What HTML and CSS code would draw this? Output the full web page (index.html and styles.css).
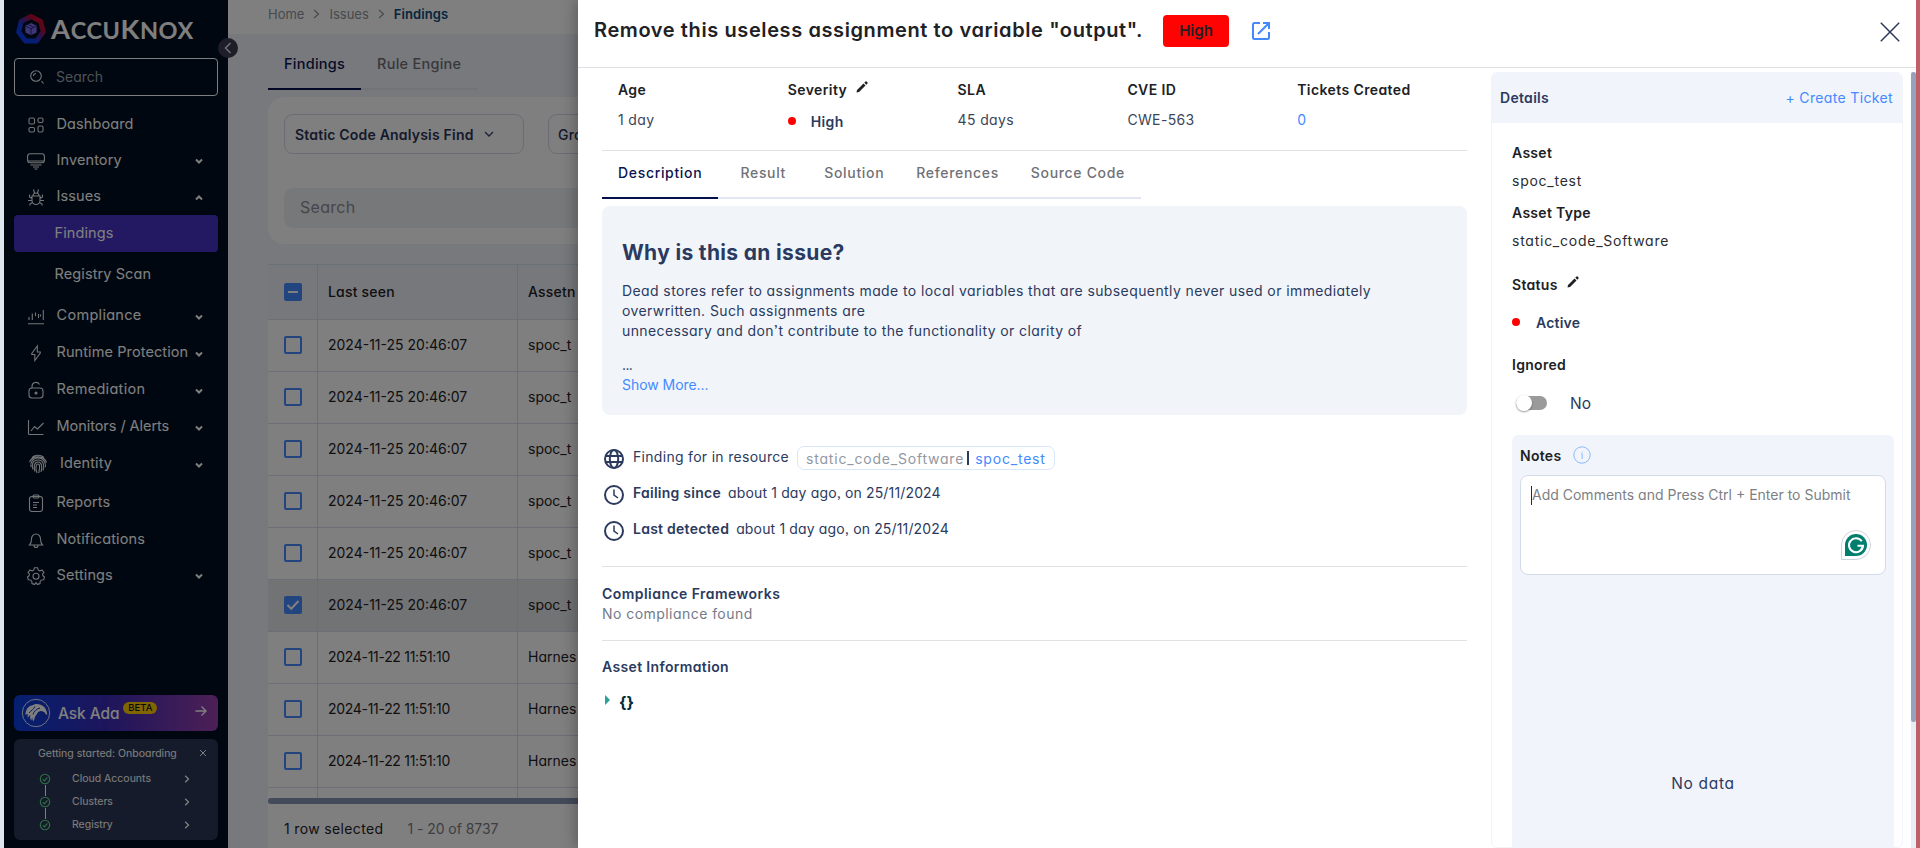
FILE: index.html
```html
<!DOCTYPE html>
<html lang="en">
<head>
<meta charset="utf-8">
<title>AccuKnox - Findings</title>
<link rel="stylesheet" href="styles.css">
</head>
<body>
<div class="app">
  <aside class="sidebar">
    <div class="brand">
      <svg class="brand-mark" width="32" height="32" viewBox="0 0 32 32">
        <defs><linearGradient id="ring" x1="0" y1="1" x2="1" y2="0"><stop offset=".3" stop-color="#0a3cf0"/><stop offset=".52" stop-color="#4a2a9c"/><stop offset=".75" stop-color="#b80c30"/></linearGradient></defs>
        <path d="M16 3.500 25.700 8.200 28.300 19 21.500 28H10.500L3.700 19 6.300 8.200Z" fill="none" stroke="url(#ring)" stroke-width="5" stroke-linejoin="round"/>
        <path d="M16 10 21.600 12.800v6.600L16 22.300 10.400 19.400V12.800Z" fill="#7d6cf0"/>
        <path d="m10.400 13 5.600 2.800 5.600-2.800M16 15.800v6.500M13.200 11.500l5.600 2.900" fill="none" stroke="#1a1d5c" stroke-width=".8"/>
      </svg>
      <div class="brand-name"><span class="big">A</span>CCU<span class="big">K</span>NOX</div>
    </div>
    <div class="side-search">
      <svg class="ic" width="16" height="16" viewBox="0 0 16 16"><circle cx="7" cy="7" r="5.300"/><path d="m12.500 12 2 2.500M4.500 7A2.500 2.500 0 0 1 7 4.500"/></svg>
      <span>Search</span>
    </div>
    <nav class="nav">
      <div class="item h36"><svg class="ic" width="18" height="18" viewBox="0 0 18 18"><rect x="2" y="2" width="5.500" height="6" rx="1.500"/><rect x="11" y="2" width="5" height="4.500" rx="1.500"/><rect x="2" y="11.500" width="5.500" height="4.500" rx="1.500"/><rect x="11" y="10" width="5" height="6" rx="1.500"/></svg><span class="lbl">Dashboard</span></div>
      <div class="item h36"><svg class="ic" width="18" height="18" viewBox="0 0 18 18"><rect x=".6" y="1.800" width="16.800" height="9" rx="2.500"/><path d="M1 9h16M3.500 13h11M6 15h6M7.500 17h3"/></svg><span class="lbl">Inventory</span><svg class="arr" width="10" height="8" viewBox="0 0 10 8"><path d="m2 2.500 3 3 3-3"/></svg></div>
      <div class="item"><svg class="ic" width="18" height="18" viewBox="0 0 18 18"><path d="M5 8h8v4.500a4 4 0 0 1-8 0ZM6 8a3 3 0 0 1 6 0M7.500 5 6.500 1.500M10.500 5l1-3.500M5 10.500 2.500 9V6.500M13 10.500 15.500 9V6.500M5 12.500H1M13 12.500h4M5.500 14.500 3 16v1.500M12.500 14.500 15 16v1.500"/></svg><span class="lbl">Issues</span><svg class="arr" width="10" height="8" viewBox="0 0 10 8"><path d="m2 5.500 3-3 3 3"/></svg></div>
      <div class="item sub active"><span class="lbl">Findings</span></div>
      <div class="item sub h45"><span class="lbl">Registry Scan</span></div>
      <div class="item"><svg class="ic" width="18" height="18" viewBox="0 0 18 18"><path d="M1 16.800h16M2 13v-3M5.300 13V6.500M8.500 9V5.500M11.500 11V7M13.500 9.500V7.500M16.300 13V3"/></svg><span class="lbl cmp">Compliance</span><svg class="arr" width="10" height="8" viewBox="0 0 10 8"><path d="m2 2.500 3 3 3-3"/></svg></div>
      <div class="item"><svg class="ic" width="18" height="18" viewBox="0 0 18 18"><path d="M10.300 2 4.800 9.500v1h3V16.500l5.500-7.500V8h-3Z"/></svg><span class="lbl">Runtime Protection</span><svg class="arr" width="10" height="8" viewBox="0 0 10 8"><path d="m2 2.500 3 3 3-3"/></svg></div>
      <div class="item"><svg class="ic" width="18" height="18" viewBox="0 0 18 18"><rect x="2" y="7" width="14" height="10" rx="3"/><path d="M5 7V5.500a4 4 0 0 1 7.500-2"/><circle cx="9" cy="12" r="1" fill="#fff"/></svg><span class="lbl cmp">Remediation</span><svg class="arr" width="10" height="8" viewBox="0 0 10 8"><path d="m2 2.500 3 3 3-3"/></svg></div>
      <div class="item"><svg class="ic" width="18" height="18" viewBox="0 0 18 18"><path d="M1.500 2v13.500a1 1 0 0 0 1 1H16.500M4 13l3.500-4.500 3 2.500 6-6"/></svg><span class="lbl mon">Monitors / Alerts</span><svg class="arr" width="10" height="8" viewBox="0 0 10 8"><path d="m2 2.500 3 3 3-3"/></svg></div>
      <div class="item ident"><svg class="ic" width="20" height="20" viewBox="0 0 20 20"><path d="M4 3.500a9 9 0 0 1 12 0M1.500 8a9 8 0 0 1 17 .5M3 13c-1-5 2-9 7-9s8 4 7.500 9M5 15.500c-1.500-4-1-9.500 5-9.500s6.500 6 5 10.500M7 17.500C5.500 13 6 8 10 8s4.500 5 3 10M9 19c-1.500-4-1.500-9 1-9s1.500 5 .8 9"/></svg><span class="lbl">Identity</span><svg class="arr" width="10" height="8" viewBox="0 0 10 8"><path d="m2 2.500 3 3 3-3"/></svg></div>
      <div class="item h40"><svg class="ic" width="18" height="18" viewBox="0 0 18 18"><rect x="2.500" y="2.500" width="13" height="15" rx="2.500"/><rect x="6" y="1" width="6" height="3" rx="1.200"/><path d="M6 8.500h6M6 11h4M6 13.500h4"/></svg><span class="lbl">Reports</span></div>
      <div class="item h35"><svg class="ic" width="18" height="18" viewBox="0 0 18 18"><path d="M2.500 14h13c-1.500-1.500-2-3-2-6a4.500 5 0 0 0-9 0c0 3-.5 4.500-2 6ZM7 14.500a2 2 0 0 0 4 0"/></svg><span class="lbl">Notifications</span></div>
      <div class="item h36"><svg class="ic" width="18" height="18" viewBox="0 0 18 18"><path d="m7.300.8-.5 2.300-1.600.8-2.100-1L1 5.300l1.500 1.800-.4 1.700L.5 10l.8 2.800 2.300.2 1.200 1.300.2 2.300 2.700.8L9 15.500l1.300 1.900 2.700-.8.200-2.300 1.200-1.300 2.300-.2.800-2.800-1.600-1.200-.4-1.700L17 5.300l-2.100-2.400-2.100 1-1.600-.8-.5-2.300Z" stroke-linejoin="round"/><circle cx="9" cy="9.300" r="3"/></svg><span class="lbl">Settings</span><svg class="arr" width="10" height="8" viewBox="0 0 10 8"><path d="m2 2.500 3 3 3-3"/></svg></div>
    </nav>
    <div class="ada">
      <svg width="30" height="30" viewBox="0 0 30 30"><circle cx="15" cy="15" r="13.700" fill="none" stroke="#dfe4ff"/><path d="M4.500 17C4.500 12 7 8 11 7.500c2-1.500 5-2 8-1 4.500 1.500 7 5 7.200 10.500L24 15.500c-.6-1.200-1.500-2-3-2.300-2.300-.4-4 .5-5 2.600-.5 1.500-2 2-2.300 4 .1 1.500-1 1.700-1.200 3.700-1-1.300-1.300-2.500-1-4-1 1-1.200 1.800-1 3-1.500-1.500-1.700-3-1-5.300C8 17.500 7.300 18.500 7 20c-.6-1.500-.5-2.800 0-4-1 0-1.800.3-2.500 1Z" fill="#fff"/><path d="M8 15c2.500-3 4.500-3.500 6-6.500M12 16.500c1-3 3-5.500 7-6.500M20.500 14.500l3 .3v3" stroke="#1538b8" fill="none"/></svg>
      <span class="ada-name">Ask Ada</span><span class="beta">BETA</span>
      <svg class="ada-arrow" width="12" height="12" viewBox="0 0 12 12"><path d="M.5 6h10.500M6.500 1.500 11 6l-4.500 4.500" fill="none" stroke="#fff" stroke-width="1.400"/></svg>
    </div>
    <div class="onb">
      <div class="onb-head"><span>Getting started: Onboarding</span><svg width="8" height="8" viewBox="0 0 8 8"><path d="m1 1 6 6M7 1 1 7" stroke="#fff" fill="none"/></svg></div>
      <div class="onb-row"><i class="tick link"><svg width="12" height="12" viewBox="0 0 12 12"><circle cx="6" cy="6" r="4.700"/><path d="m3.700 6.200 1.700 1.700 3-3.500"/></svg></i><span>Cloud Accounts</span><svg class="go" width="6" height="8" viewBox="0 0 6 8"><path d="m1.200.8 3.300 3.200-3.300 3.200"/></svg></div>
      <div class="onb-row"><i class="tick link"><svg width="12" height="12" viewBox="0 0 12 12"><circle cx="6" cy="6" r="4.700"/><path d="m3.700 6.200 1.700 1.700 3-3.500"/></svg></i><span>Clusters</span><svg class="go" width="6" height="8" viewBox="0 0 6 8"><path d="m1.200.8 3.300 3.200-3.300 3.200"/></svg></div>
      <div class="onb-row"><i class="tick"><svg width="12" height="12" viewBox="0 0 12 12"><circle cx="6" cy="6" r="4.700"/><path d="m3.700 6.200 1.700 1.700 3-3.500"/></svg></i><span>Registry</span><svg class="go" width="6" height="8" viewBox="0 0 6 8"><path d="m1.200.8 3.300 3.200-3.300 3.200"/></svg></div>
    </div>
  </aside>
  <button class="collapse" aria-label="Collapse"><svg width="8" height="12" viewBox="0 0 8 12"><path d="M6.500 1 1.500 6l5 5" fill="none" stroke="#e8e8ee" stroke-width="1.400"/></svg></button>

  <main class="main">
    <div class="crumbs"><span class="c1">Home</span><svg width="7" height="10" viewBox="0 0 7 10"><path d="m1 1 4.500 4L1 9"/></svg><span class="c2">Issues</span><svg width="7" height="10" viewBox="0 0 7 10"><path d="m1 1 4.500 4L1 9"/></svg><b>Findings</b></div>
    <div class="tabs page-tabs"><div class="tab on">Findings</div><div class="tab">Rule Engine</div></div>
    <section class="filters">
      <div class="selects">
        <div class="select"><span>Static Code Analysis Find</span><svg width="10" height="6" viewBox="0 0 10 6"><path d="m1 1 4 4 4-4" fill="none" stroke="#39436b" stroke-width="1.300"/></svg></div>
        <div class="select second"><span>Gro</span></div>
      </div>
      <div class="find">Search</div>
    </section>
    <div class="table">
      <div class="tr th"><div><i class="cb part"></i></div><div>Last seen</div><div>Assetn</div></div>
      <div class="tr"><div><i class="cb"></i></div><div>2024-11-25 20:46:07</div><div>spoc_t</div></div>
      <div class="tr"><div><i class="cb"></i></div><div>2024-11-25 20:46:07</div><div>spoc_t</div></div>
      <div class="tr"><div><i class="cb"></i></div><div>2024-11-25 20:46:07</div><div>spoc_t</div></div>
      <div class="tr"><div><i class="cb"></i></div><div>2024-11-25 20:46:07</div><div>spoc_t</div></div>
      <div class="tr"><div><i class="cb"></i></div><div>2024-11-25 20:46:07</div><div>spoc_t</div></div>
      <div class="tr sel"><div><i class="cb full"><svg width="14" height="12" viewBox="0 0 14 12"><path d="m1.500 6 3.700 3.800L12.500 2" fill="none" stroke="#fff" stroke-width="2"/></svg></i></div><div>2024-11-25 20:46:07</div><div>spoc_t</div></div>
      <div class="tr d22"><div><i class="cb"></i></div><div>2024-11-22 11:51:10</div><div>Harnes</div></div>
      <div class="tr d22"><div><i class="cb"></i></div><div>2024-11-22 11:51:10</div><div>Harnes</div></div>
      <div class="tr d22"><div><i class="cb"></i></div><div>2024-11-22 11:51:10</div><div>Harnes</div></div>
      <div class="tr cut"><div></div><div></div><div></div></div>
    </div>
    <div class="hbar"></div>
    <div class="tfoot"><span class="rs">1 row selected</span><span class="rc">1 - 20 of 8737</span></div>
  </main>

  <div class="backdrop"></div>

  <div class="drawer">
    <header class="dhead">
      <h1>Remove this useless assignment to variable "output".</h1>
      <span class="badge">High</span>
      <svg class="ext" width="20" height="20" viewBox="0 0 20 20"><path d="M9 2H3.300A1.300 1.300 0 0 0 2 3.300v13.400A1.300 1.300 0 0 0 3.300 18h13.400a1.300 1.300 0 0 0 1.300-1.300V11M12 2h6v6M18 2 7 13" fill="none" stroke="#448aff" stroke-width="2"/></svg>
      <svg class="close" width="20" height="20" viewBox="0 0 20 20"><path d="m.8.8 18.400 18.400M19.200.8.8 19.200" fill="none" stroke="#2b3a5e" stroke-width="1.500"/></svg>
    </header>
    <div class="dbody">
      <div class="left">
        <div class="facts">
          <div><b>Age</b><span>1 day</span></div>
          <div><b>Severity<svg class="pen" width="12" height="12" viewBox="0 0 12 12"><path d="M.5 11.500 1 9 7.500 2.500l2 2L3 11ZM8.300 1.700 9.500.500a.8.8 0 0 1 1.100 0l.9.900a.8.8 0 0 1 0 1.100L10.300 3.700Z"/></svg></b><span class="sev"><i class="dot"></i>High</span></div>
          <div><b>SLA</b><span>45 days</span></div>
          <div><b>CVE ID</b><span>CWE-563</span></div>
          <div><b>Tickets Created</b><span class="blue">0</span></div>
        </div>
        <div class="tabs dtabs"><div class="tab on">Description</div><div class="tab">Result</div><div class="tab">Solution</div><div class="tab">References</div><div class="tab">Source Code</div></div>
        <section class="why">
          <h2>Why is this an issue?</h2>
          <p>Dead stores refer to assignments made to local variables that are subsequently never used or immediately<br>overwritten. Such assignments are<br>unnecessary and don’t contribute to the functionality or clarity of</p>
          <div class="dots">...</div>
          <a>Show More...</a>
        </section>
        <div class="info">
          <div class="line"><svg width="22" height="22" viewBox="0 0 22 22"><circle cx="11" cy="11" r="9"/><ellipse cx="11" cy="11" rx="4.200" ry="9"/><path d="M2.500 8h17M2.500 14h17"/></svg><span class="ffr">Finding for in resource</span><div class="res"><span class="grey">static_code_Software</span><i></i><span class="blue">spoc_test</span></div></div>
          <div class="line"><svg width="22" height="22" viewBox="0 0 22 22"><circle cx="11" cy="11" r="9"/><path d="M11 5.500V11l4 3" stroke-width="1.500"/></svg><b>Failing since</b><span class="ago">about 1 day ago, on 25/11/2024</span></div>
          <div class="line"><svg width="22" height="22" viewBox="0 0 22 22"><circle cx="11" cy="11" r="9"/><path d="M11 5.500V11l4 3" stroke-width="1.500"/></svg><b>Last detected</b><span class="ago">about 1 day ago, on 25/11/2024</span></div>
        </div>
        <div class="block"><b>Compliance Frameworks</b><span>No compliance found</span></div>
        <div class="block asset"><b>Asset Information</b><div class="json"><i class="tri"></i><strong>{}</strong></div></div>
      </div>
      <div class="right">
        <div class="rhead"><b>Details</b><a>+ Create Ticket</a></div>
        <div class="rbody">
          <b class="k">Asset</b><span class="v">spoc_test</span>
          <b class="k">Asset Type</b><span class="v">static_code_Software</span>
          <b class="k status">Status<svg class="pen" width="12" height="12" viewBox="0 0 12 12"><path d="M.5 11.500 1 9 7.500 2.500l2 2L3 11ZM8.300 1.700 9.500.500a.8.8 0 0 1 1.100 0l.9.900a.8.8 0 0 1 0 1.100L10.300 3.700Z"/></svg></b>
          <div class="act"><i class="dot"></i>Active</div>
          <b class="k ign">Ignored</b>
          <div class="sw"><i class="track"><i class="knob"></i></i><span>No</span></div>
          <div class="notes">
            <div class="nhead"><b>Notes</b><svg width="18" height="18" viewBox="0 0 18 18"><circle cx="9" cy="9" r="8.200"/><path d="M8 8h1.200v5M9.200 5.800v.9"/></svg></div>
            <div class="ta"><i class="caret"></i><span>Add Comments and Press Ctrl + Enter to Submit</span>
              <svg class="gram" width="30" height="30" viewBox="0 0 30 30"><path d="M.5 29.500V15A14.500 14.500 0 1 1 15 29.500Z" fill="#fff" stroke="#cfd3dd"/><path d="M4 26V15a11 11 0 1 1 11 11Z" fill="#027e6f"/><path d="M20.800 11.300A7 7 0 1 0 22 15.800H16.500M22.300 15.800l-2.300 4" fill="none" stroke="#fff" stroke-width="2"/></svg>
            </div>
            <div class="nodata">No data</div>
          </div>
        </div>
      </div>
      <div class="vbar"><div class="thumb"></div></div>
    </div>
  </div>
  <div class="edge"></div>
</div>
</body>
</html>
```
FILE: styles.css
```css
* { box-sizing: border-box; }
body {
  margin: 0;
  font-family: Inter, "Open Sans", sans-serif;
  font-feature-settings: "cv11", "ss03";
  font-size: 14px;
  color: #2b3a5e;
}
i { font-style: normal; }
b { font-weight: 600; letter-spacing: .3px; }
.app {
  position: relative;
  display: flex;
  width: 1920px;
  height: 848px;
  overflow: hidden;
  background: #dfe5ef;
  padding-left: 4px;
  white-space: nowrap;
}

/* sidebar */
.sidebar {
  width: 224px;
  flex: none;
  background: #020f20;
  color: #fff;
  padding: 12px 10px 0;
}
.brand { display: flex; align-items: center; height: 33px; padding-left: 1px; }
.brand-name {
  font: 700 23.5px/30px Lato, sans-serif;
  letter-spacing: .55px;
  margin: 2px 0 0 4px;
}
.brand-name .big { font-size: 27.5px; }
.side-search {
  display: flex;
  align-items: center;
  gap: 11px;
  height: 38px;
  margin-top: 13px;
  padding-left: 14px;
  border: 1px solid #fff;
  border-radius: 4px;
  color: #9ca3af;
}
.side-search span { padding-bottom: 2px; }
.ic { flex: none; fill: none; stroke: #e8eaee; stroke-width: 1.1; }
.nav { padding-top: 10px; font-size: 14.5px; }
.item { display: flex; align-items: center; height: 37px; padding: 0 14px 0 13px; }
.item .ic { margin-top: 1px; }
.item .lbl { margin-left: 11.5px; margin-right: auto; letter-spacing: .1px; padding-bottom: 2px; }
.item .lbl.cmp { letter-spacing: .3px; }
.item .lbl.mon { letter-spacing: -.05px; }
.item .arr { margin-top: 2px; fill: none; stroke: #fff; stroke-width: 2; }
.h35 { height: 35px; }
.h36 { height: 36px; }
.item.h36 { height: 36px; }
.item.h35 { height: 35px; }
.item.h40 { height: 40px; }
.item.h45 { height: 45px; }
.item.sub .lbl { margin-left: 27.5px; }
.item.active { background: #4630c4; border-radius: 4px; }
.item.ident .lbl { margin-left: 12px; }
.item.ident .ic { margin-left: 1px; }
.ada {
  display: flex;
  align-items: center;
  height: 36px;
  margin-top: 102px;
  padding: 0 11px 0 7px;
  border-radius: 6px;
  background: linear-gradient(90deg, #0a3fe0, #3a2bb8 45%, #9a3fac);
}
.ada-name { font-size: 15.5px; font-weight: 500; margin: 0 0 0 7px; letter-spacing: -.1px; }
.beta {
  margin: -10px auto 0 4px;
  width: 34px;
  text-align: center;
  border-radius: 6px;
  background: #ffcc05;
  color: #111;
  font-size: 9.500px;
  font-weight: 500;
  line-height: 12px;
}
.ada-arrow { margin-top: -4px; }
.onb {
  height: 101px;
  margin-top: 8px;
  border-radius: 6px;
  background: #2a3655;
  font-size: 10.500px;
  padding-top: 3px;
}
.onb-head { display: flex; align-items: center; justify-content: space-between; height: 22px; padding: 0 11px 0 24px; }
.onb-row { display: flex; align-items: center; height: 23px; padding: 0 28px 0 25px; }
.onb-row:nth-child(2) { margin-top: 3px; }
.onb-row span { margin: 0 auto 0 21px; }
.tick { position: relative; height: 12px; }
.tick svg { display: block; fill: none; stroke: #5fe08c; stroke-width: 1.1; }
.tick.link::after {
  content: "";
  position: absolute;
  left: 5.500px;
  top: 12px;
  width: 1.500px;
  height: 11px;
  background: #fff;
}
.go { fill: none; stroke: #fff; stroke-width: 1.300; }
.collapse {
  position: absolute;
  left: 218px;
  top: 38px;
  width: 20px;
  height: 20px;
  padding: 0;
  border: 0;
  border-radius: 50%;
  background: #3b3c50;
  display: flex;
  align-items: center;
  justify-content: center;
}

/* findings page */
.main {
  width: 1688px;
  flex: none;
  background: #f1f3fb;
  overflow: hidden;
  display: flex;
  flex-direction: column;
}
.crumbs {
  flex: none;
  display: flex;
  align-items: center;
  height: 34px;
  padding: 0 0 7px 40px;
  background: #fff;
  color: #8e929b;
  font-size: 13px;
}
.crumbs svg { margin: 0 9px; fill: none; stroke: #8e929b; stroke-width: 1.200; }
.crumbs b { color: #0a4a78; letter-spacing: .1px; }
.tabs { display: flex; width: max-content; font-weight: 500; color: #6f7177; }
.tab { padding: 0 16px; border-bottom: 2px solid #e2e7f2; letter-spacing: .67px; }
.tab.on { color: #0a1551; border-color: #04104a; }
.page-tabs { margin: 4px 0 0 40px; }
.page-tabs .tab { height: 52px; line-height: 51px; font-size: 14.500px; letter-spacing: .25px; }
.filters {
  flex: none;
  height: 147px;
  margin: 7px 0 0 40px;
  padding: 17px 0 0 16px;
  background: #fff;
  border-radius: 16px 0 0 16px;
}
.selects { display: flex; gap: 24px; }
.select {
  width: 240px;
  height: 40px;
  display: flex;
  align-items: center;
  gap: 10px;
  padding-left: 10px;
  border: 1px solid #d4d8ea;
  border-radius: 9px;
  color: #2b3557;
  font-weight: 600;
  letter-spacing: .2px;
}
.select.second { font-weight: 500; padding-left: 9px; }
.find {
  height: 40px;
  margin-top: 34px;
  padding-left: 16px;
  line-height: 38px;
  border-radius: 9px;
  background: #eef0f5;
  color: #8a8d95;
  font-size: 16px;
  letter-spacing: .3px;
}
.table { flex: none; height: 534px; margin: 20px 0 0 40px; overflow: hidden; color: #1e2024; }
.tr {
  display: grid;
  grid-template-columns: 50px 200px 1fr;
  height: 52px;
  background: #fff;
  border-bottom: 1px solid #d9dcea;
}
.tr > div { display: flex; align-items: center; padding: 0 0 2px 10px; border-right: 1px solid #d9dcea; }
.tr > div:first-child { padding: 0 0 1px 16px; }
.tr.d22 > div:nth-child(2) { letter-spacing: -.3px; }
.tr.th { height: 56px; background: #eef1f9; border-top: 1px solid #d3e0ee; font-weight: 500; }
.tr.th > div { letter-spacing: .2px; }
.tr.sel { background: #e3e6ea; }
.cb { width: 18px; height: 18px; border: 2px solid #448aff; border-radius: 2px; }
.cb.part { background: #448aff; display: flex; align-items: center; justify-content: center; }
.cb.part::before { content: ""; width: 10px; height: 2px; background: #fff; }
.cb.full { background: #448aff; }
.cb.full svg { display: block; margin-top: 1px; }
.hbar { flex: none; height: 6px; margin-left: 40px; border-radius: 3px; background: #8796b4; }
.tfoot { flex: 1; margin-left: 40px; padding: 5px 0 0 16px; background: #fff; display: flex; align-items: center; gap: 24px; color: #1e2024; }
.rs { letter-spacing: .35px; }
.rc { color: #7b7d83; letter-spacing: -.05px; }

.backdrop { position: absolute; left: 4px; right: 4px; top: 0; bottom: 0; background: rgba(0, 0, 0, .5); }
.edge { position: absolute; right: 0; top: 0; width: 4px; height: 100%; background: #bf5f68; }

/* details drawer */
.drawer {
  position: absolute;
  left: 578px;
  top: 0;
  width: 1338px;
  height: 848px;
  background: #fff;
  box-shadow: -2px 0 14px rgba(0, 0, 0, .3);
}
.dhead { display: flex; align-items: center; height: 68px; padding: 0 16px 6px; border-bottom: 1px solid #dee1e4; }
h1 { margin: 0; padding-bottom: 2px; font-size: 20px; font-weight: 600; color: #202124; letter-spacing: .6px; width: 549px; }
.badge {
  width: 66px;
  height: 32px;
  margin: 0 22px 0 20px;
  border-radius: 4px;
  background: #ff0303;
  color: #202124;
  font-weight: 600;
  font-size: 15px;
  line-height: 32px;
  text-align: center;
}
.close { margin: 3px 0 0 auto; }
.dbody { display: flex; height: 780px; }
.left { width: 865px; margin-left: 24px; }
.facts { display: grid; grid-template-columns: repeat(5, 169.800px); height: 83px; padding: 11px 0 0 16px; border-bottom: 1px solid #dfe1e4; color: #3c4557; letter-spacing: .35px; }
.facts b, .facts span { display: flex; align-items: center; height: 20px; }
.facts b { color: #202124; letter-spacing: .4px; }
.facts span { margin-top: 10px; }
.facts .sev { font-weight: 600; color: #2b3a5e; margin-top: 12px; }
.facts .blue, .blue, a { color: #448aff; }
.pen { fill: #202124; margin: -4px 0 0 9px; }
.dot { width: 8px; height: 8px; border-radius: 50%; background: #f00; margin-right: 15px; }
.dtabs .tab { height: 48px; line-height: 43px; min-width: 90px; text-align: center; }
.why { height: 209px; margin-top: 7px; padding: 33px 20px 0; border-radius: 8px; background: #f1f5fa; line-height: 20px; }
.why h2 { margin: 0 0 14px; font-size: 21px; line-height: 28px; font-weight: 700; letter-spacing: .33px; }
.why p { margin: 0 0 14px; letter-spacing: .4px; }
.dots { letter-spacing: -.6px; }
.why a { display: block; letter-spacing: -.05px; }
.info { height: 152px; padding-top: 24px; border-bottom: 1px solid #dfe1e4; }
.line { display: flex; align-items: center; height: 36px; padding: 0 0 2px 1px; }
.line > svg { margin: 5px 8px 0 0; fill: none; stroke: #2b3a5e; stroke-width: 2; }
.ffr { letter-spacing: .3px; }
.line b { letter-spacing: .25px; }
.ago { margin-left: 7px; letter-spacing: .15px; }
.res { display: flex; align-items: center; height: 24px; margin: 4px 0 0 8px; padding: 0 8px; border: 1px solid #d9e7fb; border-radius: 7px; letter-spacing: .8px; }
.res i { width: 2px; height: 14px; margin: 0 6px 0 3px; background: #2b3a5e; }
.grey { color: #9298a3; }
.block { height: 73.500px; padding-top: 17px; border-bottom: 1px solid #dfe1e4; line-height: 20px; }
.block b, .block span { display: block; letter-spacing: .45px; }
.block span { color: #757b88; }
.block.asset { border: 0; padding-top: 16px; }
.block.asset b { letter-spacing: .35px; }
.json { display: flex; align-items: center; padding-left: 3px; margin-top: 15px; color: #002b36; }
.tri { border-left: 5px solid #2aa198; border-top: 5px solid transparent; border-bottom: 5px solid transparent; margin: -3px 9px 0 0; }
.json strong { font-size: 16px; }
.right { width: 412px; height: 776px; margin: 4px 0 0 24px; border: 1px solid #f1f4fa; border-radius: 6px; overflow: hidden; }
.rhead { display: flex; align-items: center; justify-content: space-between; height: 50px; padding: 0 9px 1px 8px; background: #f1f4fa; letter-spacing: .35px; }
.rbody { padding: 19px 8px 0 20px; color: #2a2c30; }
.rbody .k, .rbody .v { display: flex; align-items: center; height: 20px; }
.rbody .k { color: #202124; }
.rbody .v { margin: 8px 0 12px; letter-spacing: .75px; }
.rbody .status { margin-top: 24px; }
.act { display: flex; align-items: center; height: 20px; margin-top: 18px; font-weight: 600; color: #2b3a5e; letter-spacing: .2px; }
.act .dot { margin-right: 16px; }
.rbody .ign { margin-top: 22px; }
.sw { display: flex; align-items: center; height: 20px; margin-top: 19px; font-size: 15.500px; color: #2b3a5e; }
.track { position: relative; width: 31px; height: 14px; margin: 0 23px 0 4px; border-radius: 7px; background: #9a9a9a; }
.knob { position: absolute; left: 0; top: -1px; width: 16px; height: 16px; border-radius: 50%; background: #fff; box-shadow: 0 1px 2px rgba(0, 0, 0, .4); }
.notes { height: 420px; margin-top: 22px; padding: 8px; border-radius: 6px; background: #f1f4fa; color: #2b3a5e; }
.nhead { display: flex; align-items: center; height: 24px; }
.nhead b { color: #202124; }
.nhead svg { margin-left: 12px; fill: none; stroke: #8db8fa; }
.ta { position: relative; display: flex; height: 100px; margin-top: 8px; padding: 9px 10px 0; border: 1px solid #d3dce9; border-radius: 8px; background: #fff; color: #7d7f84; line-height: 19px; }
.caret { width: 1px; height: 19px; background: #202a44; margin-top: 1px; }
.gram { position: absolute; right: 14px; bottom: 14px; }
.nodata { margin-top: 198px; font-size: 15.500px; line-height: 22px; text-align: center; letter-spacing: .7px; }
.vbar { width: 5px; margin: 4px 0 0 auto; background: #e8eef6; }
.thumb { height: 650px; border-radius: 3px; background: #94a2bb; }
```
